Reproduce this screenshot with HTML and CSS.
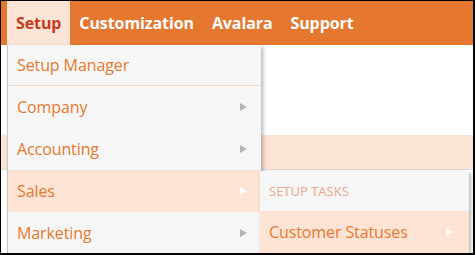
FILE: index.html
```html
<!DOCTYPE html>
<html lang="en">
<head>
  <meta charset="UTF-8">
  <title>Setup Menu</title>
  <link rel="stylesheet" href="styles.css">
</head>
<body>
  <div class="frame">
    <div class="topbar">
      <a class="tab active">Setup</a>
      <a class="tab">Customization</a>
      <a class="tab">Avalara</a>
      <a class="tab">Support</a>
    </div>
    <div class="page">
      <div class="band"></div>
    </div>

    <ul class="dropdown">
      <li class="item first">Setup Manager</li>
      <li class="item">Company <span class="arrow"></span></li>
      <li class="item">Accounting <span class="arrow"></span></li>
      <li class="item hover">Sales <span class="arrow"></span></li>
      <li class="item">Marketing <span class="arrow"></span></li>
    </ul>

    <ul class="submenu">
      <li class="sub-head">Setup Tasks</li>
      <li class="item hover">Customer Statuses <span class="arrow"></span></li>
    </ul>
  </div>
</body>
</html>
```

FILE: styles.css
```css
* { box-sizing: border-box; }
body { margin: 0; font-family: "Open Sans", "DejaVu Sans", sans-serif; background: #fff; }
.frame { position: relative; width: 475px; height: 255px; overflow: hidden; border-top: 1px solid #000; border-left: 1px solid #000; border-right: 2px solid #000; border-bottom: 2px solid #000; background: #fff; }

.topbar { display: flex; height: 44px; background: #e5772e; padding-left: 6px; }
.tab { display: block; padding: 0 9px; line-height: 44px; font-size: 16px; font-weight: bold; letter-spacing: -0.1px; color: #fff; }
.tab.active { background: #fce4d6; color: #c9391b; }

.page { padding-top: 90px; }
.band { height: 35px; background: #fce4d6; border-bottom: 1px solid #ddd; }

ul { list-style: none; margin: 0; padding: 0; }
.dropdown { position: absolute; left: 6px; top: 44px; width: 254px; background: #f6f6f6; border-left: 1px solid #c8c8c8; box-shadow: 2px 2px 4px rgba(0,0,0,0.3); }
.item { display: flex; align-items: center; justify-content: space-between; height: 42px; padding: 0 14px 0 9px; font-size: 16px; letter-spacing: -0.1px; color: #e8782e; }
.item.first { height: 41px; border-bottom: 1px solid #f7d6c5; }
.item.hover { background: #fce3d4; }
.arrow { width: 0; height: 0; border-left: 7px solid #b4b4b4; border-top: 4px solid transparent; border-bottom: 4px solid transparent; }
.item.hover .arrow { border-left-color: #fff; }

.submenu { position: absolute; left: 259px; top: 170px; width: 209px; background: #f6f6f6; box-shadow: 2px 2px 4px rgba(0,0,0,0.3); }
.sub-head { height: 40px; line-height: 40px; padding-left: 9px; font-size: 13px; text-transform: uppercase; color: #eba98c; }
.submenu .item { padding-right: 16px; }
```
